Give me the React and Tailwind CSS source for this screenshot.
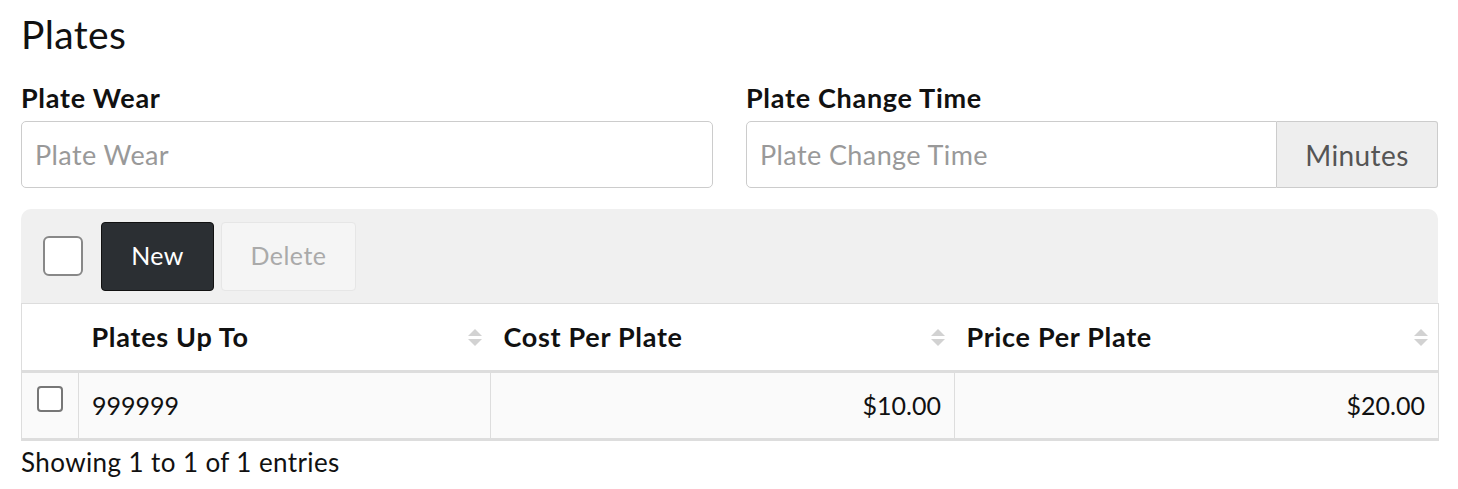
import React from 'react';

const SortIcon = () => (
  <svg width="14" height="19" viewBox="0 0 14 19" className="shrink-0">
    <path d="M7 1 L14 8 L0 8 Z" fill="#d2d2d2" />
    <path d="M7 18 L14 11 L0 11 Z" fill="#d2d2d2" />
  </svg>
);

const App = () => {
  return (
    <div className="min-h-screen bg-white px-[21px] pt-[16px] font-['Lato',sans-serif] text-[#111]">
      {/* Title */}
      <h3 className="text-[39px] leading-[36px] font-normal tracking-[0.4px]">Plates</h3>

      {/* Settings */}
      <div className="mt-[34px] grid grid-cols-2 gap-x-[33px] w-[1417px]">
        <div>
          <label className="block text-[27px] leading-[24px] font-bold tracking-[0.7px] mb-[11px]">Plate Wear</label>
          <input
            type="text"
            placeholder="Plate Wear"
            className="w-full h-[67px] border border-[#ccc] rounded-[5px] px-[13px] text-[27px] tracking-[0.4px] placeholder:text-[#999] outline-none"
          />
        </div>
        <div>
          <label className="block text-[27px] leading-[24px] font-bold tracking-[0.7px] mb-[11px]">Plate Change Time</label>
          <div className="flex h-[67px]">
            <input
              type="text"
              placeholder="Plate Change Time"
              className="flex-1 min-w-0 h-full border border-[#ccc] rounded-l-[5px] px-[13px] text-[27px] tracking-[0.4px] placeholder:text-[#999] outline-none"
            />
            <span className="w-[161px] h-full flex items-center justify-center bg-[#eee] border border-l-0 border-[#ccc] rounded-r-[3px] text-[28px] tracking-[0.4px] text-[#555]">
              Minutes
            </span>
          </div>
        </div>
      </div>

      {/* Toolbar */}
      <div className="mt-[21px] w-[1417px] h-[94px] bg-[#f0f0f0] rounded-t-[10px] flex items-center pl-[22px] gap-[18px]">
        <span className="w-[40px] h-[40px] rounded-[6px] border-2 border-[#888] bg-white" />
        <div className="flex gap-[7px]">
          <button className="w-[113px] h-[69px] rounded-[4px] bg-[#2b2f33] border border-[#111] text-white text-[25px] tracking-[0.3px]">
            New
          </button>
          <button className="w-[135px] h-[69px] rounded-[4px] bg-[#f5f5f5] border border-[#e6e6e6] text-[#aaa] text-[25px] tracking-[0.5px]">
            Delete
          </button>
        </div>
      </div>

      {/* Table */}
      <table className="w-[1417px] border-collapse table-fixed text-[25px]">
        <colgroup>
          <col className="w-[57px]" />
          <col className="w-[412px]" />
          <col className="w-[464px]" />
          <col className="w-[484px]" />
        </colgroup>
        <thead>
          <tr className="h-[68px] bg-white text-[27px] tracking-[0.7px]">
            <th className="border-l border-t border-[#ddd] border-b-[3px]" />
            <th className="border-t border-b-[3px] border-[#ddd] pl-[13px] pr-[9px] text-left font-bold">
              <div className="flex items-center justify-between">
                <span>Plates Up To</span>
                <SortIcon />
              </div>
            </th>
            <th className="border-t border-b-[3px] border-[#ddd] pl-[13px] pr-[10px] text-left font-bold">
              <div className="flex items-center justify-between">
                <span>Cost Per Plate</span>
                <SortIcon />
              </div>
            </th>
            <th className="border-t border-r border-b-[3px] border-[#ddd] pl-[12px] pr-[10px] text-left font-bold">
              <div className="flex items-center justify-between">
                <span>Price Per Plate</span>
                <SortIcon />
              </div>
            </th>
          </tr>
        </thead>
        <tbody>
          <tr className="h-[68px] bg-[#fafafa]">
            <td className="border border-[#ddd] border-b-[3px] align-top pt-[13px]">
              <div className="flex justify-center">
                <span className="block w-[26px] h-[26px] rounded-[4px] border-2 border-[#777] bg-white" />
              </div>
            </td>
            <td className="border border-[#ddd] border-b-[3px] pl-[13px]">999999</td>
            <td className="border border-[#ddd] border-b-[3px] pr-[13px] text-right">$10.00</td>
            <td className="border border-[#ddd] border-b-[3px] pr-[13px] text-right">$20.00</td>
          </tr>
        </tbody>
      </table>

      <div className="mt-[6px] text-[26px] leading-[30px] tracking-[0.4px]">Showing 1 to 1 of 1 entries</div>
    </div>
  );
};

export default App;
